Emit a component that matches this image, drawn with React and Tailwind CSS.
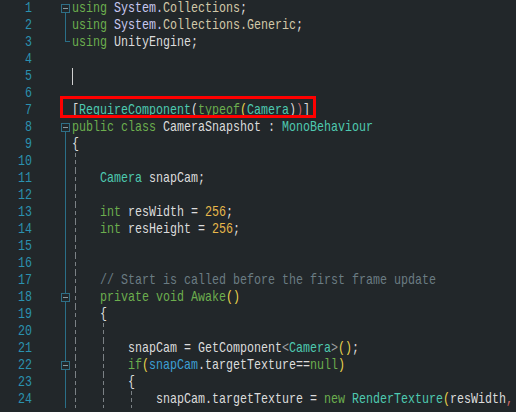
import React from "react";

const W = "text-[#dcdcdc]";
const G = "text-[#6cae4e]";
const T = "text-[#4ec9b0]";
const Y = "text-[#e8d44d]";
const N = "text-[#e8b84a]";
const C = "text-[#6b7c83]";
const L = "text-[#d2c8a8]";
const S = "text-[#c8c8f0]";
const R = "text-[#d16969]";
const B = "text-[#3c9fd4]";
const P = "text-[#a0a0a0]";

const lines = [
  { t: [["using ", G], ["System.", S], ["Collections", L], [";", W]], fold: "box" },
  { t: [["using ", G], ["System.", S], ["Collections.Generic", L], [";", W]], fold: "line" },
  { t: [["using ", G], ["UnityEngine", W], [";", W]], fold: "end" },
  { t: [] },
  { t: [], cursor: true },
  { t: [] },
  { t: [["[", W], ["RequireComponent", T], ["(", W], ["typeof", G], ["(", Y], ["Camera", T], [")", W], [")", R], ["]", W]] },
  { t: [["public class ", G], ["CameraSnapshot", W], [" : ", W], ["MonoBehaviour", T]], fold: "box" },
  { t: [["{", W]], fold: "line" },
  { t: [], fold: "line", g: 1 },
  { t: [["Camera ", T], ["snapCam", W], [";", W]], fold: "line", g: 1 },
  { t: [], fold: "line", g: 1 },
  { t: [["int ", G], ["resWidth", W], [" = ", W], ["256", N], [";", W]], fold: "line", g: 1 },
  { t: [["int ", G], ["resHeight", W], [" = ", W], ["256", N], [";", W]], fold: "line", g: 1 },
  { t: [], fold: "line", g: 1 },
  { t: [], fold: "line", g: 1 },
  { t: [["// Start is called before the first frame update", C]], fold: "line", g: 1 },
  { t: [["private void Awake", G], ["()", Y]], fold: "linebox", g: 1 },
  { t: [["{", W]], fold: "line", g: 1 },
  { t: [], fold: "line", g: 2 },
  { t: [["snapCam = GetComponent", W], ["<", P], ["Camera", T], [">", P], ["()", Y], [";", W]], fold: "line", g: 2 },
  { t: [["if", G], ["(", Y], ["snapCam", B], [".targetTexture==", W], ["null", G], [")", Y]], fold: "linebox", g: 2 },
  { t: [["{", W]], fold: "line", g: 2 },
  { t: [["snapCam.targetTexture = ", W], ["new ", G], ["RenderTexture", T], ["(", Y], ["resWidth", W], [",", R]], fold: "line", g: 3 },
];

const FOLD = "bg-[#2a6f88]";

function Box() {
  return (
    <div className="w-[9px] h-[9px] shrink-0 border border-[#2f6f86] flex items-center justify-center">
      <div className="w-[5px] h-px bg-[#8a9aa0]" />
    </div>
  );
}

function Fold({ kind }) {
  return (
    <div className="w-[40px] h-full shrink-0 flex pl-[29px]">
      <div className="w-[9px] h-full flex flex-col items-center">
        {kind === "line" && <div className={`w-px flex-1 ${FOLD}`} />}
        {kind === "linebox" && (
          <>
            <div className={`w-px h-[4px] ${FOLD}`} />
            <Box />
            <div className={`w-px flex-1 ${FOLD}`} />
          </>
        )}
        {kind === "box" && (
          <>
            <div className="h-[4px]" />
            <Box />
            <div className={`w-px flex-1 ${FOLD}`} />
          </>
        )}
        {kind === "end" && (
          <div className="self-stretch pl-[4px]">
            <div className="w-[5px] h-[8px] border-l border-b border-[#2a6f88]" />
          </div>
        )}
      </div>
    </div>
  );
}

function Guide() {
  return (
    <div className="w-[28px] h-full shrink-0 pl-[3px]">
      <div className="w-px h-full bg-[repeating-linear-gradient(to_bottom,#7b8185_0px,#7b8185_4px,transparent_4px,transparent_7px)]" />
    </div>
  );
}

export default function App() {
  return (
    <div className="relative w-[516px] h-[412px] overflow-hidden bg-[#22272a] font-['Liberation_Mono',monospace]">
      {lines.map((ln, i) => (
        <div key={i} className="flex h-[17px] leading-[17px]">
          <div className="w-[32px] shrink-0 text-right text-[15px] text-[#2b91af]">
            <span className="inline-block origin-right scale-x-[0.7778]">{i + 1}</span>
          </div>
          <Fold kind={ln.fold} />
          <div className="flex flex-1 h-full">
            {Array.from({ length: ln.g || 0 }).map((_, k) => (
              <Guide key={k} />
            ))}
            {ln.cursor && <div className="w-px h-full bg-[#d0d0d0]" />}
            <div className="origin-left scale-x-[0.7778] whitespace-pre text-[15px]">
              {ln.t.map(([s, c], j) => (
                <span key={j} className={c}>{s}</span>
              ))}
            </div>
          </div>
        </div>
      ))}
      <div className="absolute left-[60px] top-[96px] w-[256px] h-[22px] border-[3px] border-[#ff0000]" />
    </div>
  );
}
